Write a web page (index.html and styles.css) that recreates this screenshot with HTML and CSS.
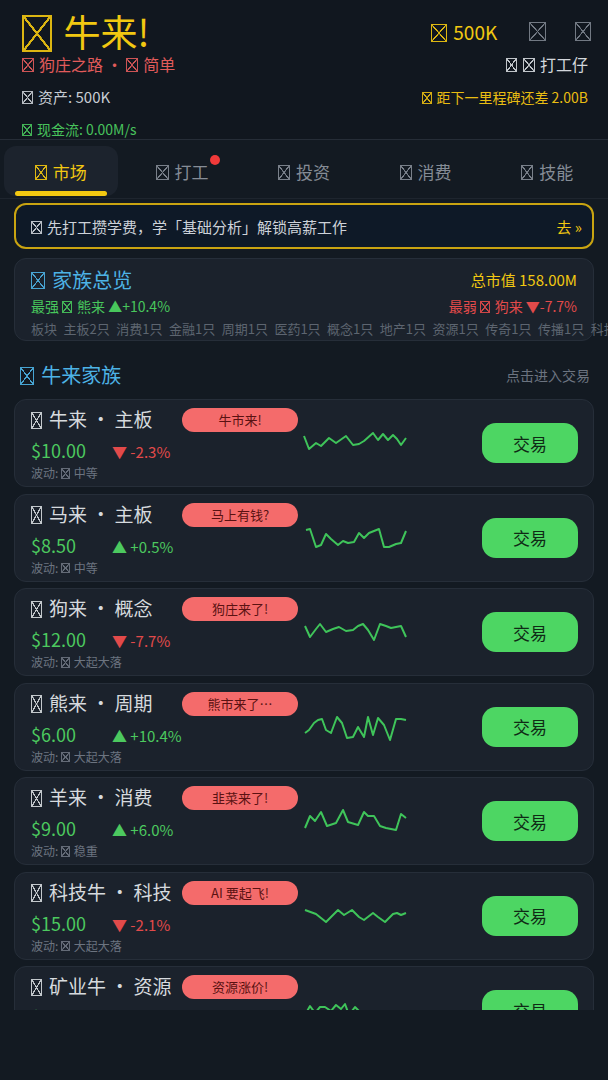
FILE: index.html
```html
<!DOCTYPE html>
<html lang="zh-CN">
<head>
<meta charset="utf-8">
<title>牛来!</title>
<link rel="stylesheet" href="styles.css">
</head>
<body>
<div class="app">
  <header class="top">
    <div class="top-left">
      <div class="title"><i class="t"></i> 牛来!</div>
      <div class="sub"><i class="t"></i> 狗庄之路 · <i class="t"></i> 简单</div>
      <div class="asset"><i class="t"></i> 资产: 500K</div>
      <div class="flow"><i class="t"></i> 现金流: 0.00M/s</div>
    </div>
    <div class="top-right">
      <div class="cash-row">
        <span class="cash"><i class="t"></i> 500K</span>
        <span class="icon-btn"><i class="t"></i></span>
        <span class="icon-btn"><i class="t"></i></span>
      </div>
      <div class="rank"><i class="t"></i> <i class="t"></i> 打工仔</div>
      <div class="milestone"><i class="t"></i> 距下一里程碑还差 2.00B</div>
    </div>
  </header>

  <nav class="tabs">
    <div class="tab active"><div class="tab-inner"><span class="tab-label"><i class="t"></i> 市场</span></div></div>
    <div class="tab"><div class="tab-inner"><span class="tab-label"><i class="t"></i> 打工<i class="dot"></i></span></div></div>
    <div class="tab"><div class="tab-inner"><span class="tab-label"><i class="t"></i> 投资</span></div></div>
    <div class="tab"><div class="tab-inner"><span class="tab-label"><i class="t"></i> 消费</span></div></div>
    <div class="tab"><div class="tab-inner"><span class="tab-label"><i class="t"></i> 技能</span></div></div>
  </nav>

  <div class="banner">
    <span class="banner-text"><i class="t"></i> 先打工攒学费，学「基础分析」解锁高薪工作</span>
    <span class="banner-go">去 »</span>
  </div>

  <section class="overview">
    <div class="ov-row ov-head">
      <span class="ov-title"><i class="t"></i> 家族总览</span>
      <span class="ov-total">总市值 158.00M</span>
    </div>
    <div class="ov-row ov-mid">
      <span class="up">最强 <i class="t"></i> 熊来 ▲+10.4%</span>
      <span class="down">最弱 <i class="t"></i> 狗来 ▼-7.7%</span>
    </div>
    <div class="sectors"><span>板块</span><span>主板2只</span><span>消费1只</span><span>金融1只</span><span>周期1只</span><span>医药1只</span><span>概念1只</span><span>地产1只</span><span>资源1只</span><span>传奇1只</span><span>传播1只</span><span>科技1只</span></div>
  </section>

  <div class="sec-head">
    <span class="sec-title"><i class="t"></i> 牛来家族</span>
    <span class="sec-hint">点击进入交易</span>
  </div>

  <div class="list">
    <div class="card">
      <div class="info">
        <div class="name"><i class="t"></i> 牛来 · 主板</div>
        <div class="price-row"><span class="price">$10.00</span><span class="chg down">▼ -2.3%</span></div>
        <div class="vol">波动: <i class="t"></i> 中等</div>
      </div>
      <span class="badge">牛市来!</span>
      <svg class="spark" viewBox="0 0 104 30"><polyline points="1,8 6,21 13,15 18,18 26,10 33,15 43,8 50,17 56,16 61,13 70,5 75,12 80,6 85,12 90,7 94,11 98,17 103,10"/></svg>
      <button class="trade">交易</button>
    </div>
    <div class="card">
      <div class="info">
        <div class="name"><i class="t"></i> 马来 · 主板</div>
        <div class="price-row"><span class="price">$8.50</span><span class="chg up">▲ +0.5%</span></div>
        <div class="vol">波动: <i class="t"></i> 中等</div>
      </div>
      <span class="badge">马上有钱?</span>
      <svg class="spark" viewBox="0 0 104 30"><polyline points="3,7 7,6 13,24 18,22 23,11 28,16 35,22 40,18 45,20 51,19 56,10 61,15 66,10 71,8 76,6 81,24 86,24 93,21 98,20 103,8"/></svg>
      <button class="trade">交易</button>
    </div>
    <div class="card">
      <div class="info">
        <div class="name"><i class="t"></i> 狗来 · 概念</div>
        <div class="price-row"><span class="price">$12.00</span><span class="chg down">▼ -7.7%</span></div>
        <div class="vol">波动: <i class="t"></i> 大起大落</div>
      </div>
      <span class="badge">狗庄来了!</span>
      <svg class="spark" viewBox="0 0 104 30"><polyline points="2,9 7,20 13,12 17,7 23,15 30,12 36,10 43,14 50,13 55,9 60,7 65,13 71,23 77,7 83,9 88,11 93,10 98,9 103,20"/></svg>
      <button class="trade">交易</button>
    </div>
    <div class="card">
      <div class="info">
        <div class="name"><i class="t"></i> 熊来 · 周期</div>
        <div class="price-row"><span class="price">$6.00</span><span class="chg up">▲ +10.4%</span></div>
        <div class="vol">波动: <i class="t"></i> 大起大落</div>
      </div>
      <span class="badge">熊市来了…</span>
      <svg class="spark" viewBox="0 0 104 30"><polyline points="2,21 6,18 11,11 15,8 19,7 23,18 28,21 34,5 39,11 44,26 50,25 55,15 61,25 65,5 70,23 75,6 81,13 87,28 93,7 98,7 103,8"/></svg>
      <button class="trade">交易</button>
    </div>
    <div class="card">
      <div class="info">
        <div class="name"><i class="t"></i> 羊来 · 消费</div>
        <div class="price-row"><span class="price">$9.00</span><span class="chg up">▲ +6.0%</span></div>
        <div class="vol">波动: <i class="t"></i> 稳重</div>
      </div>
      <span class="badge">韭菜来了!</span>
      <svg class="spark" viewBox="0 0 104 30"><polyline points="2,22 7,10 12,15 18,6 24,20 33,17 40,4 45,16 55,19 61,6 65,10 71,10 77,20 83,22 93,24 98,8 103,12"/></svg>
      <button class="trade">交易</button>
    </div>
    <div class="card">
      <div class="info">
        <div class="name"><i class="t"></i> 科技牛 · 科技</div>
        <div class="price-row"><span class="price">$15.00</span><span class="chg down">▼ -2.1%</span></div>
        <div class="vol">波动: <i class="t"></i> 大起大落</div>
      </div>
      <span class="badge">AI 要起飞!</span>
      <svg class="spark" viewBox="0 0 104 30"><polyline points="2,9 13,13 23,21 35,9 41,14 49,9 56,16 61,19 70,12 75,16 82,21 90,13 94,12 98,14 103,12"/></svg>
      <button class="trade">交易</button>
    </div>
    <div class="card">
      <div class="info">
        <div class="name"><i class="t"></i> 矿业牛 · 资源</div>
        <div class="price-row"><span class="price">$20.00</span><span class="chg up">▲ +3.2%</span></div>
        <div class="vol">波动: <i class="t"></i> 大起大落</div>
      </div>
      <span class="badge">资源涨价!</span>
      <svg class="spark" viewBox="0 0 104 30"><polyline points="2,20 7,11 12,18 17,12 22,12 28,16 33,10 38,14 42,9 46,20 52,12 58,18 64,22 72,16 80,24 88,18 96,22 103,19"/></svg>
      <button class="trade">交易</button>
    </div>
  </div>
</div>
</body>
</html>
```

FILE: styles.css
```css
html, body {
  margin: 0;
  padding: 0;
  background: #131a22;
}

body {
  font-family: "Noto Sans CJK SC", "Noto Sans", sans-serif;
  color: #d6dade;
}

/* missing-glyph box (tofu) used in place of each emoji */
.t {
  display: inline-block;
  box-sizing: border-box;
  width: 0.72em;
  height: 0.88em;
  margin-right: 0.12em;
  vertical-align: -0.08em;
  border: 1px solid currentColor;
  background:
    linear-gradient(to top right, transparent calc(50% - 0.7px), currentColor calc(50% - 0.5px), currentColor calc(50% + 0.5px), transparent calc(50% + 0.7px)),
    linear-gradient(to bottom right, transparent calc(50% - 0.7px), currentColor calc(50% - 0.5px), currentColor calc(50% + 0.5px), transparent calc(50% + 0.7px));
  opacity: 0.9;
}

.app {
  width: 608px;
  height: 1010px;
  overflow: hidden;
  display: flex;
  flex-direction: column;
  background: #131a22;
}

/* ---------- header ---------- */
.top {
  flex: 0 0 140px;
  box-sizing: border-box;
  border-bottom: 1px solid #262d37;
  background: #11171f;
  display: flex;
  justify-content: space-between;
  padding: 10px 20px 0 22px;
}

.title {
  font-size: 37px;
  line-height: 42px;
  color: #f2c811;
}

.title .t {
  width: 0.8em;
  height: 1em;
  vertical-align: -0.13em;
  margin-right: 0.1em;
  border-width: 2px;
  background:
    linear-gradient(to top right, transparent calc(50% - 1.2px), currentColor calc(50% - 1px), currentColor calc(50% + 1px), transparent calc(50% + 1.2px)),
    linear-gradient(to bottom right, transparent calc(50% - 1.2px), currentColor calc(50% - 1px), currentColor calc(50% + 1px), transparent calc(50% + 1.2px));
}

.sub {
  font-size: 16px;
  line-height: 24px;
  color: #e25b5b;
}

.asset {
  margin-top: 11px;
  font-size: 15px;
  line-height: 20px;
  color: #c8cdd3;
}

.flow {
  margin-top: 12px;
  font-size: 14px;
  line-height: 20px;
  color: #48c35c;
}

.top-right {
  display: flex;
  flex-direction: column;
  align-items: flex-end;
}

.cash-row {
  height: 42px;
  display: flex;
  align-items: center;
}

.cash {
  font-size: 19px;
  color: #f2c811;
}

.cash .t,
.icon-btn .t {
  width: 0.82em;
  height: 0.95em;
  vertical-align: -0.12em;
}

.icon-btn {
  margin-left: 29px;
  font-size: 20px;
  line-height: 1;
  color: #7d848e;
}

.icon-btn .t {
  margin-right: 0;
  display: block;
}

.cash + .icon-btn {
  margin-left: 32px;
}

.icon-btn:last-child {
  margin-right: -3px;
}

.rank {
  font-size: 16px;
  line-height: 24px;
  color: #d3d7dc;
}

.milestone {
  margin-top: 11px;
  font-size: 14px;
  line-height: 20px;
  color: #e9bd12;
}

/* ---------- tabs ---------- */
.tabs {
  flex: 0 0 58px;
  box-sizing: border-box;
  display: flex;
  padding: 6px 0 2px;
  border-bottom: 1px solid #1e252e;
}

.tab {
  flex: 1;
  padding: 0 4px;
}

.tab-inner {
  position: relative;
  height: 50px;
  border-radius: 12px;
  display: flex;
  align-items: center;
  justify-content: center;
  font-size: 17px;
  color: #858c96;
}

.tab.active .tab-inner {
  background: #1c232d;
  color: #f2c811;
}

.tab.active .tab-inner::after {
  content: "";
  position: absolute;
  left: 11px;
  right: 11px;
  bottom: 0;
  height: 5px;
  border-radius: 3px;
  background: #f2c811;
}

.tab-label {
  position: relative;
}

.dot {
  position: absolute;
  right: -12px;
  top: -4px;
  width: 10px;
  height: 10px;
  border-radius: 50%;
  background: #f03a3a;
}

/* ---------- banner ---------- */
.banner {
  flex: 0 0 46px;
  box-sizing: border-box;
  margin: 4px 14px 0;
  border: 2px solid #c9a411;
  border-radius: 12px;
  background: #0e1927;
  display: flex;
  align-items: center;
  justify-content: space-between;
  padding: 0 10px 0 15px;
}

.banner-text {
  font-size: 15px;
  color: #cdd2d9;
}

.banner-go {
  font-size: 15px;
  color: #f2c811;
}

/* ---------- overview ---------- */
.overview {
  flex: 0 0 83px;
  box-sizing: border-box;
  margin: 9px 14px 0;
  background: #1b222c;
  border: 1px solid #262e39;
  border-radius: 12px;
  padding: 7px 16px 0;
}

.ov-row {
  display: flex;
  justify-content: space-between;
  align-items: center;
}

.ov-head {
  height: 26px;
}

.ov-title {
  font-size: 20px;
  color: #4db3e6;
}

.ov-total {
  font-size: 15px;
  color: #f2c811;
}

.ov-mid {
  margin-top: 4px;
  height: 20px;
  font-size: 14px;
}

.sectors {
  margin-top: 5px;
  height: 16px;
  line-height: 16px;
  font-size: 13px;
  color: #5d6570;
  white-space: nowrap;
  display: flex;
  gap: 6.5px;
}

.up {
  color: #48c75c;
}

.down {
  color: #e24a4a;
}

/* ---------- section head ---------- */
.sec-head {
  flex: 0 0 28px;
  margin: 19px 18px 10px 20px;
  display: flex;
  justify-content: space-between;
  align-items: center;
}

.sec-title {
  font-size: 20px;
  color: #4db3e6;
}

.sec-hint {
  font-size: 14px;
  color: #6c7480;
}

/* ---------- list ---------- */
.list {
  flex: 1;
  min-height: 0;
  overflow: hidden;
  padding: 0 14px;
  display: flex;
  flex-direction: column;
  gap: 6.5px;
}

.card {
  position: relative;
  flex: 0 0 88px;
  box-sizing: border-box;
  background: #1b222c;
  border: 1px solid #262e39;
  border-radius: 12px;
  display: flex;
  align-items: center;
  padding: 0 15px 0 16px;
}

.info {
  flex: 0 0 272px;
  align-self: flex-start;
  padding-top: 6px;
}

.name {
  font-size: 19px;
  line-height: 26px;
  color: #d6dade;
}

.name .t {
  width: 0.6em;
  height: 0.93em;
  vertical-align: -0.12em;
}

.price-row {
  margin-top: 5px;
  height: 26px;
  display: flex;
  align-items: baseline;
}

.price {
  width: 81px;
  font-size: 18px;
  color: #4cc95f;
}

.chg {
  font-size: 15px;
}

.chg.up {
  color: #4cc95f;
}

.vol {
  margin-top: 2px;
  font-size: 12px;
  line-height: 16px;
  color: #6c7480;
}

.badge {
  position: absolute;
  left: 167px;
  top: 8px;
  width: 116px;
  height: 24px;
  border-radius: 12px;
  background: #f46b6b;
  color: #5a1212;
  font-size: 13px;
  line-height: 24px;
  text-align: center;
}

.spark {
  flex: 0 0 104px;
  width: 104px;
  height: 30px;
}

.spark polyline {
  fill: none;
  stroke: #3fc45a;
  stroke-width: 2;
  stroke-linejoin: round;
}

.trade {
  margin-left: auto;
  width: 96px;
  height: 40px;
  border: 0;
  border-radius: 14px;
  background: #4dd663;
  color: #0f2a15;
  font-family: inherit;
  font-size: 17px;
  padding: 0;
}
```
